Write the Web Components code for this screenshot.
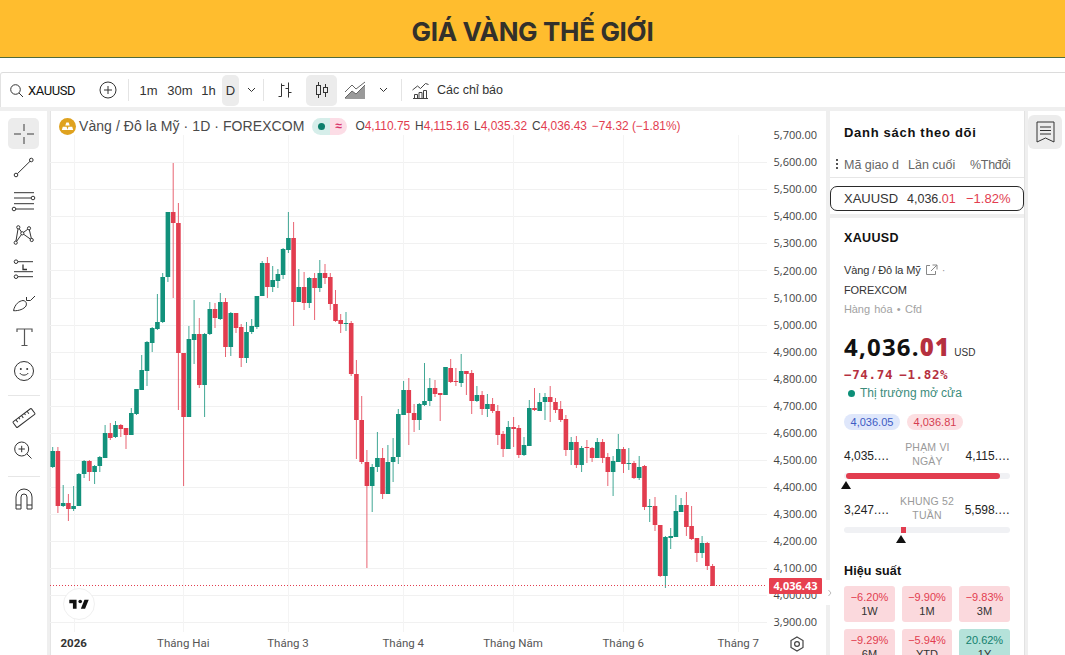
<!DOCTYPE html>
<html lang="vi">
<head>
<meta charset="utf-8">
<title>Giá vàng thế giới</title>
<style>
  html, body { margin: 0; height: 100%; background: #fff; overflow: hidden; }
  body { font-family: "Liberation Sans", Arial, sans-serif; color: #1a1a1a; }
  .workspace { display: flex; height: 544px; padding-top: 4px; background: #efefef; }
</style>
</head>
<body>
<page-header>GIÁ VÀNG THẾ GIỚI</page-header>
<chart-toolbar></chart-toolbar>
<div class="workspace">
  <drawing-rail></drawing-rail>
  <candle-chart></candle-chart>
  <side-panel>
    <watch-list></watch-list>
    <symbol-details></symbol-details>
  </side-panel>
  <widget-rail></widget-rail>
</div>

<script>
/**
 * Attaches an open shadow root holding the given markup.
 *
 * @param {HTMLElement} host - The custom element.
 * @param {string} html - Markup and styles of the shadow root.
 */
function mount(host, html) {
  const template = document.createElement('template')
  template.innerHTML = html
  host.attachShadow({ mode: 'open' }).appendChild(template.content.cloneNode(true))
}

/** Gold title bar at the top of the page. */
class PageHeader extends HTMLElement {
  constructor() {
    super()
    mount(this, `
      <style>
        :host {
          display: flex; align-items: center; justify-content: center;
          height: 51px; padding-top: 6px; background: #ffbd2e; border-bottom: 1px solid #4f6b3c;
          font: 700 26px Inter, "Liberation Sans", sans-serif; letter-spacing: -.35px; color: #33312b;
        }
      </style>
      <slot></slot>
    `)
  }
}

/** Symbol search, intervals and chart style buttons. */
class ChartToolbar extends HTMLElement {
  constructor() {
    super()
    mount(this, `
      <style>
        :host {
          display: flex; align-items: center; height: 34px; margin-top: 14px;
          border-top: 1px solid #dcdcdc; border-left: 1px solid #e2e2e2; border-top-left-radius: 3px; background: #fff;
          font: 13px "Liberation Sans", sans-serif; color: #333;
        }
        svg { display: block; fill: none; stroke: #333; stroke-width: 1; }
        .search { display: flex; align-items: center; gap: 4px; width: 98px; padding-left: 8px; box-sizing: border-box; }
        .symbol { font: 400 13px Roboto, sans-serif; color: #111; letter-spacing: -.4px; }
        .add { width: 29px; }
        .sep { width: 1px; height: 22px; background: #e4e4e4; }
        .tf { display: flex; align-items: center; justify-content: center; height: 31px; }
        .on { background: #ececec; border-radius: 5px; }
        .ind { display: flex; align-items: center; gap: 7px; margin-left: 9px; font-size: 12.5px; }
      </style>
      <div class="search">
        <svg width="15" height="15" viewBox="0 0 15 15" stroke-width="1.2"><circle cx="6.5" cy="6.5" r="4.8"/><path d="M10 10l4 4"/></svg>
        <span class="symbol">XAUUSD</span>
      </div>
      <div class="add"><svg width="18" height="18" viewBox="0 0 18 18"><circle cx="9" cy="9" r="8"/><path d="M9 5v8M5 9h8"/></svg></div>
      <div class="sep"></div>
      <div class="tf" style="margin-left:10px;width:19px">1m</div>
      <div class="tf" style="margin-left:8px;width:28px">30m</div>
      <div class="tf" style="margin-left:7px;width:15px">1h</div>
      <div class="tf on" style="margin-left:6px;width:17px">D</div>
      <div class="tf" style="width:24px"><svg width="9" height="6" viewBox="0 0 9 6"><path d="M1 1l3.5 3.5L8 1"/></svg></div>
      <div class="sep"></div>
      <div class="tf" style="width:42px;margin-left:0"><svg width="18" height="18" viewBox="0 0 18 18"><path d="M5.5 2.500v13M2.500 15.500h3M5.500 4.500h3M12.500 1.500v15M9.500 7.500h3M12.500 11.500h3"/></svg></div>
      <div class="tf on" style="width:31px"><svg width="16" height="20" viewBox="0 0 16 20"><path d="M4.500 2v16M11.500 4v13"/><rect x="2.500" y="5.500" width="4" height="9" fill="#ececec"/><rect x="9.500" y="7.500" width="4" height="5" fill="#ececec"/></svg></div>
      <div class="tf" style="width:36px"><svg width="23" height="19" viewBox="0 0 23 19"><path d="M1 17l7-7 4 3 9-9v14H1z" fill="#9a9a9a" stroke="none"/><path d="M1 11l7-7 4 4 9-7M1 17l7-7 4 3 9-9" stroke="#666"/></svg></div>
      <div class="tf" style="width:20px"><svg width="9" height="6" viewBox="0 0 9 6"><path d="M1 1l3.500 3.500L8 1"/></svg></div>
      <div class="sep" style="margin-left:8px"></div>
      <div class="ind">
        <svg width="19" height="19" viewBox="0 0 19 19"><path d="M1.500 9l5-4 3 2.500 5-5 3 1M2 17.500h15M3.500 17.500v-4h3v4M8 17.500v-6h3v6M12.500 17.500v-8h3v8" stroke="#444"/></svg>
        <span>Các chỉ báo</span>
      </div>
    `)
  }
}

/** Left column of drawing tools. */
class DrawingRail extends HTMLElement {
  constructor() {
    super()
    const icons = [
      '<path d="M14 4v7M14 17v7M4 14h7M17 14h7" stroke="#777" stroke-width="1.5"/>',
      '<circle cx="6" cy="22" r="1.8"/><circle cx="21.3" cy="7" r="1.8"/><path d="M7.400 20.700L20 8.300"/>',
      '<path d="M4 5.700h20M4 11h17M4 16.700h20M6 22h18"/><circle cx="23" cy="11" r="1.8"/><circle cx="4" cy="22" r="1.8"/>',
      '<path d="M5.700 21.700L8.300 6.300l4 6 6.700-5 2.700 11.700-9.400-6.700-6.600 9.400"/><circle cx="8.300" cy="6.300" r="1.600" fill="#fff"/><circle cx="19" cy="7.300" r="1.600" fill="#fff"/><circle cx="12.300" cy="12.300" r="1.600" fill="#fff"/><circle cx="5.700" cy="21.700" r="1.600" fill="#fff"/><circle cx="21.700" cy="19" r="1.600" fill="#fff"/>',
      '<circle cx="6" cy="6.700" r="1.800"/><circle cx="6" cy="21.700" r="1.800"/><path d="M8 6.700h15M4 16.700h19M8 21.700h15"/><path d="M13 9.500v5h4" stroke-width="1.300"/>',
      '<path d="M3.500 21.700C5 15 9 12 13 11.500c3 .5 4 2.500 3 5.500-2 3-7 5-12.500 4.700z"/><path d="M16.500 8v3.500h4L25 7"/>',
      '<path d="M7 9V6h15v3M14.500 6v16.500M11.500 22.500h6" stroke="#555" stroke-width="1.200"/>',
      '<circle cx="14" cy="14" r="9.500"/><circle cx="10.800" cy="12" r="1" fill="#333" stroke="none"/><circle cx="17.200" cy="12" r="1" fill="#333" stroke="none"/><path d="M9.800 16c1.500 2.800 6.900 2.800 8.400 0"/>',
      'sep',
      '<g transform="rotate(-37 14 14)"><rect x="2.500" y="10.500" width="23" height="7" rx=".8"/><path d="M6.500 10.500v3M10 10.500v2M13.500 10.500v3M17 10.500v2M20.500 10.500v3"/></g>',
      '<circle cx="11.700" cy="11" r="7"/><path d="M17 16l4.500 4.500M11.700 7.800v6.400M8.500 11h6.400"/>',
      'sep',
      '<path d="M6 24V12a8 8 0 0 1 16 0v12h-5V12a3 3 0 0 0-6 0v12zM6 20h5M17 20h5"/>'
    ]
    const items = icons.map((icon, i) => icon === 'sep'
      ? '<div class="sep"></div>'
      : `<div class="tool${i === 0 ? ' on' : ''}"><svg width="28" height="28" viewBox="0 0 28 28">${icon}</svg></div>`)
    mount(this, `
      <style>
        :host {
          display: flex; flex-direction: column; align-items: center; flex: none;
          width: 47px; margin-right: 3px; padding-top: 5px; box-sizing: border-box; background: #fff;
        }
        svg { display: block; fill: none; stroke: #333; stroke-width: 1; }
        .tool { display: flex; align-items: center; justify-content: center; width: 31px; height: 34px; }
        .on { height: 31px; margin: 2px 0 1px; background: #ececec; border-radius: 5px; }
        .sep { width: 32px; height: 1px; margin: 7px 0 5px; background: #e6e6e6; }
      </style>
      ${items.join('')}
    `)
  }
}

/**
 * Daily candles read off the chart, in page pixels.
 * Each row: colour, body top, body bottom, wick top, wick bottom.
 */
const CANDLES = [
  ['g',451,467,447,468],['r',451,506,447,513],['g',503,506,485,507],['r',503,509,494,521],['g',506,509,486,511],
  ['g',474,506,473,506],['g',461,474,460,478],['r',461,472,460,481],['g',466,472,465,484],['g',457,466,456,472],
  ['g',433,458,425,458],['r',433,438,423,440],['g',425,437,421,438],['r',425,429,424,437],['r',428,435,428,449],
  ['g',413,435,408,435],['g',389,414,389,415],['g',370,390,355,390],['g',342,371,341,386],['g',328,343,327,352],
  ['g',322,329,294,330],['g',277,322,273,323],['g',212,277,212,282],['r',212,223,163,298],['r',223,353,203,410],
  ['r',353,417,353,486],['g',339,417,326,417],['g',334,340,300,364],['r',334,385,318,388],['g',334,385,333,417],
  ['g',309,334,302,335],['r',309,318,303,328],['g',302,319,293,320],['r',302,347,298,357],['g',313,347,312,356],
  ['r',313,328,313,333],['r',327,358,324,367],['g',332,358,322,363],['g',326,332,319,334],['g',296,327,296,329],
  ['g',263,296,261,296],['r',263,287,257,298],['g',280,287,266,292],['g',274,281,269,288],['g',249,275,248,279],
  ['g',238,250,212,253],['r',238,302,222,326],['g',287,302,269,302],['r',287,303,272,310],['g',278,303,277,308],
  ['r',278,288,273,320],['g',273,288,260,292],['r',273,278,264,284],['r',277,304,273,310],['r',304,321,290,322],
  ['r',320,324,314,333],['g',323,324,312,331],['r',323,374,321,376],['r',374,420,360,459],['r',420,462,396,464],
  ['r',462,486,450,568],['g',467,486,464,512],['g',458,467,432,472],['r',458,494,448,499],['g',462,494,445,494],
  ['g',457,462,438,482],['g',414,457,409,464],['g',390,415,381,415],['r',390,413,378,445],['r',413,420,404,432],
  ['g',404,420,403,430],['g',401,405,363,406],['g',388,401,378,406],['r',388,394,380,397],['r',393,395,393,421],
  ['g',367,395,367,395],['r',368,382,359,383],['r',381,382,368,386],['g',371,383,354,387],['r',371,374,371,395],
  ['r',373,401,370,414],['g',395,401,386,402],['r',395,409,391,415],['g',404,409,394,417],['r',404,411,398,413],
  ['r',411,435,405,445],['r',434,449,431,457],['g',427,449,421,449],['r',427,429,417,447],['r',428,455,425,458],
  ['g',445,455,437,456],['g',408,446,400,446],['r',408,410,388,411],['g',402,411,393,411],['g',397,402,393,420],
  ['r',397,402,386,422],['r',402,410,398,413],['r',409,420,401,422],['r',419,450,415,456],['g',442,450,437,465],
  ['r',442,465,436,468],['g',448,465,446,472],['r',447,448,440,463],['r',448,458,447,462],['g',442,458,438,458],
  ['r',442,458,439,463],['r',457,472,453,486],['g',461,472,456,496],['g',449,462,434,462],['r',449,464,447,473],
  ['g',463,464,448,470],['r',463,478,461,479],['g',467,478,456,480],['r',466,507,465,510],['g',506,507,499,522],
  ['r',506,525,497,531],['r',525,576,525,577],['g',537,576,536,588],['g',536,538,528,549],['g',511,537,495,537],
  ['g',505,512,498,512],['r',505,527,492,536],['r',526,539,506,540],['r',538,553,538,562],['g',543,553,536,558],
  ['r',543,566,542,570],['r',566,586,564,586]
]

/** Candlestick chart with price and time axes, drawn on its own canvas. */
class CandleChart extends HTMLElement {
  constructor() {
    super()
    const colors = { g: '#12917b', r: '#e23d4f' }
    const candles = CANDLES.map(([c, top, bottom, wickTop, wickBottom], i) => {
      const x = 52.7 + i * 5.237
      return `<path d="M${x.toFixed(1)} ${wickTop}V${wickBottom}" stroke="${colors[c]}" stroke-opacity=".8"/>` +
        `<rect x="${(x - 2.3).toFixed(1)}" y="${top}" width="4.6" height="${Math.max(bottom - top, 1)}" fill="${colors[c]}"/>`
    }).join('')

    let grid = ''
    let prices = ''
    for (let p = 5700; p >= 3900; p -= 100) {
      const y = 162.3 + (5600 - p) * 0.2704
      if (p < 5700) grid += `<path d="M50 ${Math.round(y) + 0.5}H767" stroke="#f1f1f1"/>`
      prices += `<text x="817" y="${(y + 4).toFixed(1)}" text-anchor="end">${p.toLocaleString('en-US')}.00</text>`
    }
    const months = [[73.7, '2026'], [183.3, 'Tháng Hai'], [288, 'Tháng 3'], [403.3, 'Tháng 4'], [513, 'Tháng Năm'], [623.3, 'Tháng 6'], [738.3, 'Tháng 7']]
    const times = months.map(([x, label], i) => {
      grid += `<path d="M${Math.round(x) + 0.5} 135V632" stroke="#f4f4f4"/>`
      return `<text class="${i === 0 ? 'year' : 'time'}" x="${x}" y="647" text-anchor="middle">${label}</text>`
    }).join('')

    mount(this, `
      <style>
        :host { display: block; position: relative; flex: none; width: 776px; height: 544px; background: #fff; border-left: 1px solid #e4e4e4; box-sizing: border-box; }
        svg.canvas { position: absolute; left: -1px; top: 0; display: block; }
        text { font: 11px "Open Sans", sans-serif; fill: #444; }
        .time { font: 11.5px Roboto, sans-serif; fill: #555; }
        .year { font: 700 11.5px Roboto, sans-serif; fill: #333; }
        .tag { font-weight: 700; fill: #fff; font-size: 11px; }
        .legend {
          position: absolute; left: 8px; top: 6px; display: flex; align-items: center; height: 18px;
          font: 14px "Liberation Sans", sans-serif; color: #4a4a4a; white-space: nowrap;
        }
        .title { letter-spacing: .07px; }
        .coin { width: 17px; height: 17px; margin-right: 3px; display: block; }
        .status { display: flex; margin: 0 8px; height: 17px; width: 35px; border-radius: 9px; overflow: hidden; font-size: 12px; }
        .open { flex: 1; background: #d6eeea; display: flex; align-items: center; justify-content: center; }
        .open i { width: 7px; height: 7px; border-radius: 50%; background: #0c7f6c; }
        .wave { flex: 1; background: #fcdde6; color: #d8336a; text-align: center; line-height: 16px; font-weight: 700; }
        .ohlc { font-size: 11.9px; color: #e23d4f; display: flex; gap: 5px; }
        .ohlc b { font-weight: 400; color: #444; }
        .logo {
          position: absolute; left: 12px; top: 477px; width: 30px; height: 30px; border-radius: 50%;
          background: #fff; border: 1px solid #f0f0f0; display: flex; align-items: center; justify-content: center;
        }
        .gear { position: absolute; left: 738px; top: 525px; display: block; fill: none; stroke: #444; }
        .handle {
          position: absolute; right: -8px; top: 469px; z-index: 1; width: 8px; height: 25px;
          background: #fff; border-radius: 0 4px 4px 0; display: flex; align-items: center; justify-content: center;
        }
        .handle svg { display: block; fill: none; stroke: #bbb; }
      </style>
      <svg class="canvas" width="776" height="544" viewBox="50 111 776 544">
        ${grid}
        ${candles}
        <path d="M50 585.500H767" stroke="#e23d4f" stroke-dasharray="1 2"/>
        ${prices}
        <rect x="769" y="578" width="53" height="16" rx="1" fill="#e7404f"/>
        <text class="tag" x="795.500" y="590" text-anchor="middle">4,036.43</text>
        ${times}
      </svg>
      <div class="legend">
        <svg class="coin" viewBox="0 0 17 17"><circle cx="8.500" cy="8.500" r="8.500" fill="#dfa21f"/><path d="M6.300 7.500l1-3h2.400l1 3zM2.800 12l1-3.200h3.800l1 3.200zM8.400 12l1-3.200h3.800l1 3.200z" fill="#fff"/></svg>
        <span class="title">Vàng / Đô la Mỹ · 1D · FOREXCOM</span>
        <div class="status"><div class="open"><i></i></div><div class="wave">≈</div></div>
        <div class="ohlc">
          <span><b>O</b>4,110.75</span><span><b>H</b>4,115.16</span><span><b>L</b>4,035.32</span><span><b>C</b>4,036.43</span><span>−74.32 (−1.81%)</span>
        </div>
      </div>
      <div class="logo"><svg width="22" height="17" viewBox="0 0 36 28" fill="#111"><path d="M14 6H2v6h6v9h6V6zm14 15h-7l6-15h7l-6 15z"/><circle cx="20" cy="9" r="3"/></svg></div>
      <svg class="gear" width="16" height="16" viewBox="0 0 16 16" stroke-width="1.200"><path d="M8 1l6 3.500v7L8 15l-6-3.500v-7z"/><circle cx="8" cy="8" r="2.400"/></svg>
      <div class="handle"><svg width="4" height="8" viewBox="0 0 4 8"><path d="M.5 1l2.500 3-2.500 3"/></svg></div>
    `)
  }
}

/** White column holding the watchlist and the symbol details. */
class SidePanel extends HTMLElement {
  constructor() {
    super()
    mount(this, `
      <style>
        :host { display: flex; flex-direction: column; gap: 4px; flex: none; width: 194px; margin-left: 4px; overflow: hidden; border-right: 1px solid #e2e2e2; }
      </style>
      <slot></slot>
    `)
  }
}

/** Watchlist heading, columns and the single selected row. */
class WatchList extends HTMLElement {
  constructor() {
    super()
    mount(this, `
      <style>
        :host { display: block; height: 103px; background: #fff; box-sizing: border-box; font-family: "Liberation Sans", sans-serif; position: relative; }
        h2 { margin: 0; padding: 14px 0 0 14px; height: 42px; box-sizing: border-box; font-size: 13px; line-height: 16px; letter-spacing: .7px; color: #111; }
        .cols { display: flex; height: 25px; align-items: center; border-bottom: 1px solid #e6e6e6; font-size: 12.5px; color: #666; box-sizing: border-box; padding-left: 14px; position: relative; }
        .dots { position: absolute; left: 6px; top: 6px; width: 2px; height: 2px; background: #555; box-shadow: 0 4px #555, 0 8px #555; }
        .cols span:nth-of-type(1) { width: 64px; }
        .cols span:nth-of-type(2) { width: 62px; }
        .cols span:nth-of-type(3) { letter-spacing: -.3px; }
        .row { display: flex; align-items: center; height: 25px; margin-top: 8px; border: 1px solid #2a2a2a; border-radius: 7px; box-sizing: border-box; padding-left: 13px; font-size: 13px; color: #333; white-space: nowrap; }
        .sym { width: 63px; }
        .last { width: 59px; font-size: 12.5px; }
        .red { color: #e23d4f; }
      </style>
      <h2>Danh sách theo dõi</h2>
      <div class="cols"><i class="dots"></i><span>Mã giao d</span><span>Lần cuối</span><span>%Thđổi</span></div>
      <div class="row"><span class="sym">XAUUSD</span><span class="last">4,036.<span class="red">01</span></span><span class="red">−1.82%</span></div>
    `)
  }
}

/** A low / label / high row with its gauge bar. */
class RangeRow extends HTMLElement {
  constructor() {
    super()
    mount(this, `
      <style>
        :host { display: block; position: relative; height: 54px; font: 12px "Liberation Sans", sans-serif; color: #222; }
        .vals { display: flex; align-items: center; justify-content: space-between; height: 28px; }
        .name { align-self: flex-start; margin-top: -2px; width: 70px; text-align: center; font-size: 10.5px; line-height: 14px; color: #9a9a9a; letter-spacing: .2px; }
        .track { position: relative; height: 6px; margin-top: 3px; background: #f0f1f4; border-radius: 3px; }
        ::slotted([slot=fill]) { position: absolute; top: 0; height: 100%; background: #e23d4f; }
        ::slotted([slot=mark]) {
          position: absolute; top: 8px; width: 0; height: 0;
          border-left: 5px solid transparent; border-right: 5px solid transparent; border-bottom: 8px solid #111;
        }
      </style>
      <div class="vals"><slot name="low"></slot><div class="name"><slot name="label"></slot></div><slot name="high"></slot></div>
      <div class="track"><slot name="fill"></slot><slot name="mark"></slot></div>
    `)
  }
}

/** One tile of the performance grid. */
class PerfTile extends HTMLElement {
  constructor() {
    super()
    mount(this, `
      <style>
        :host { display: block; height: 36px; padding-top: 4px; box-sizing: border-box; text-align: center; background: #fbd9dd; border-radius: 3px; font: 11px/14px "Liberation Sans", sans-serif; color: #e23d4f; }
        :host([up]) { background: #b5e2da; color: #12806d; }
        div { color: #333; }
      </style>
      <slot></slot><div>${this.getAttribute('label')}</div>
    `)
  }
}

/** Details of the selected symbol. */
class SymbolDetails extends HTMLElement {
  constructor() {
    super()
    mount(this, `
      <style>
        :host { display: block; flex: 1; background: #fff; padding: 0 14px; font-family: "Liberation Sans", sans-serif; color: #222; overflow: hidden; }
        h3 { margin: 0; padding-top: 13px; height: 38px; box-sizing: border-box; font-size: 12.5px; line-height: 15px; letter-spacing: .35px; color: #111; }
        .name, .meta { font-size: 11px; line-height: 20px; letter-spacing: -.1px; }
        .name { display: flex; align-items: center; gap: 4px; margin-top: 4px; color: #333; }
        .name svg { display: block; fill: none; stroke: #888; }
        .meta { color: #a2a2a2; margin-top: -1px; word-spacing: 1.5px; }
        .price { margin-top: 12px; display: flex; align-items: baseline; font: 700 24px/32px "Open Sans", sans-serif; color: #111; letter-spacing: 1.2px; }
        .price b { color: #b5303f; }
        .price small { font: 10px "Liberation Sans", sans-serif; margin-left: 4px; letter-spacing: 0; color: #333; }
        .change { margin-top: 3px; font: 700 12.5px/18px "DejaVu Sans Mono", monospace; color: #b5303f; letter-spacing: .65px; word-spacing: -2px; }
        .open { display: flex; align-items: center; gap: 5px; margin-top: -1px; padding-left: 4px; font-size: 12px; line-height: 20px; color: #3b8c7c; }
        .open i { width: 7px; height: 7px; border-radius: 50%; background: #0c8f78; }
        .quotes { display: flex; gap: 7px; margin-top: 11px; margin-bottom: 12px; }
        .quotes span { width: 56px; height: 16px; border-radius: 8px; text-align: center; font-size: 11px; line-height: 16px; }
        .bid { background: #dfe7fb; color: #3d5cc4; }
        .ask { background: #fcdfe2; color: #d53d50; }
        h4 { margin: 13px 0 0; font-size: 12.5px; line-height: 16px; letter-spacing: .1px; color: #111; }
        .tiles { display: grid; grid-template-columns: 51px 50px 51px; gap: 7px; margin-top: 7px; }
      </style>
      <h3>XAUUSD</h3>
      <div class="name">Vàng / Đô la Mỹ
        <svg width="13" height="12" viewBox="0 0 13 12"><path d="M5 1.500H1.500v9h9V7M7.500 1H12v4.500M12 1L6 7"/></svg>
        <span style="color:#999">·</span>
      </div>
      <div class="name" style="margin-top:0">FOREXCOM</div>
      <div class="meta">Hàng hóa • Cfd</div>
      <div class="price">4,036.<b>01</b><small>USD</small></div>
      <div class="change">−74.74 −1.82%</div>
      <div class="open"><i></i>Thị trường mở cửa</div>
      <div class="quotes"><span class="bid">4,036.05</span><span class="ask">4,036.81</span></div>
      <range-row>
        <span slot="low">4,035.…</span>
        <span slot="label">PHẠM VI NGÀY</span>
        <span slot="high">4,115.…</span>
        <i slot="fill" style="left:2px;width:154px;border-radius:3px"></i>
        <i slot="mark" style="left:-3px"></i>
      </range-row>
      <range-row>
        <span slot="low">3,247.…</span>
        <span slot="label">KHUNG 52 TUẦN</span>
        <span slot="high">5,598.…</span>
        <i slot="fill" style="left:57px;width:5px"></i>
        <i slot="mark" style="left:52px"></i>
      </range-row>
      <h4>Hiệu suất</h4>
      <div class="tiles">
        <perf-tile label="1W">−6.20%</perf-tile>
        <perf-tile label="1M">−9.90%</perf-tile>
        <perf-tile label="3M">−9.83%</perf-tile>
        <perf-tile label="6M">−9.29%</perf-tile>
        <perf-tile label="YTD">−5.94%</perf-tile>
        <perf-tile label="1Y" up>20.62%</perf-tile>
      </div>
    `)
  }
}

/** Far right column with the watchlist button. */
class WidgetRail extends HTMLElement {
  constructor() {
    super()
    mount(this, `
      <style>
        :host { display: block; flex: 1; margin-left: 3px; background: #fff; padding: 4px 3px 0 0; }
        div { width: 34px; height: 34px; border-radius: 6px; background: #ececec; display: flex; align-items: center; justify-content: center; }
        svg { display: block; fill: none; stroke: #333; }
      </style>
      <div>
        <svg width="19" height="22" viewBox="0 0 19 22"><path d="M1 1h17v20l-8.500-4L1 21zM4 6h11M4 9.500h11M4 13h11"/></svg>
      </div>
    `)
  }
}

customElements.define('page-header', PageHeader)
customElements.define('chart-toolbar', ChartToolbar)
customElements.define('drawing-rail', DrawingRail)
customElements.define('candle-chart', CandleChart)
customElements.define('side-panel', SidePanel)
customElements.define('watch-list', WatchList)
customElements.define('range-row', RangeRow)
customElements.define('perf-tile', PerfTile)
customElements.define('symbol-details', SymbolDetails)
customElements.define('widget-rail', WidgetRail)
</script>
</body>
</html>
